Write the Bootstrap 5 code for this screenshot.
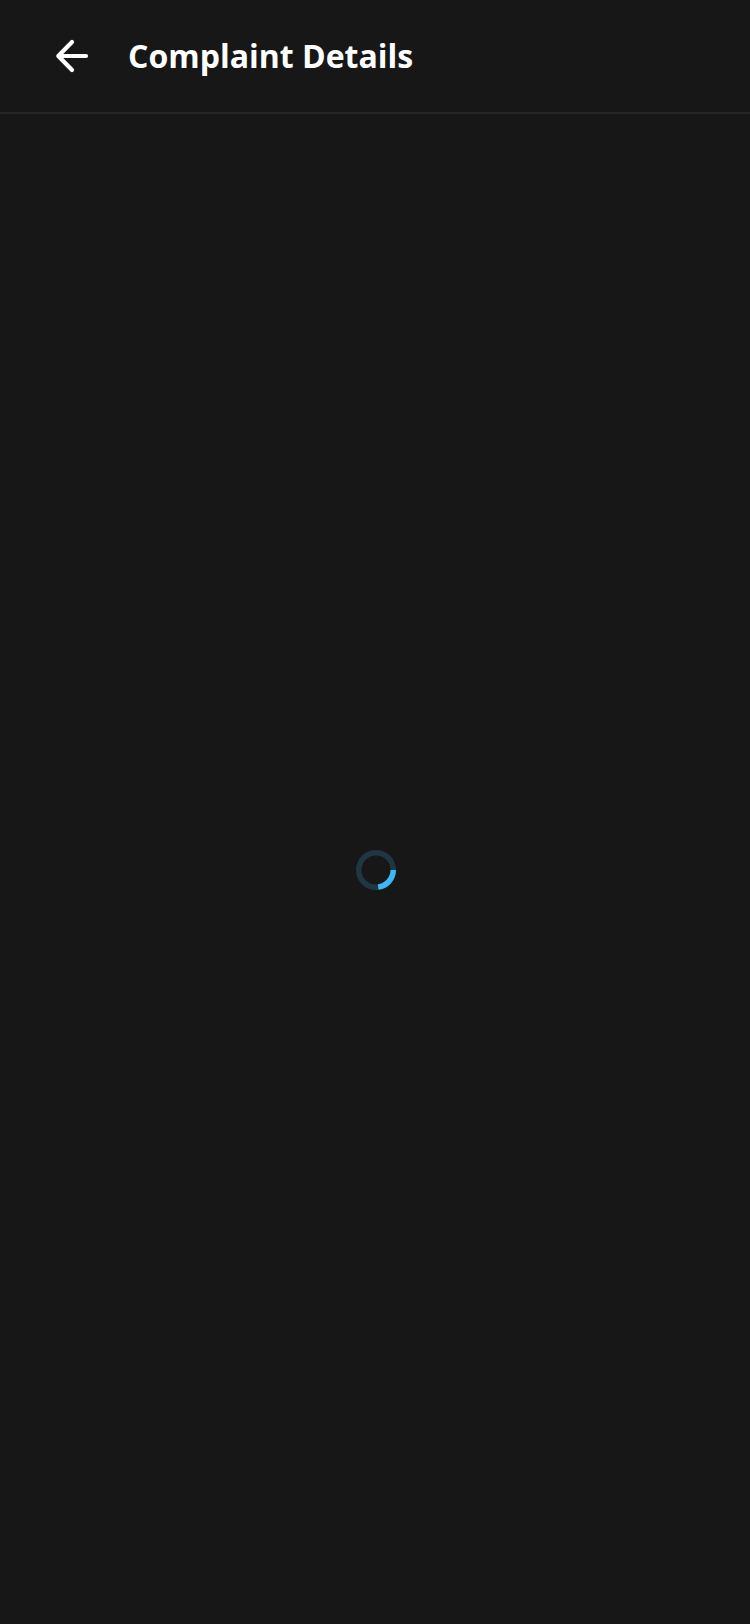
<!DOCTYPE html>
<html lang="en" data-bs-theme="dark">
<head>
<meta charset="utf-8">
<meta name="viewport" content="width=device-width, initial-scale=1">
<title>Complaint Details</title>
<link href="https://cdn.jsdelivr.net/npm/bootstrap@5.3.0/dist/css/bootstrap.min.css" rel="stylesheet">
<style>
body { background: #171717; color: #fff; font-family: "Open Sans", "Noto Sans", sans-serif; }
.app-header { height: 114px; padding: 0 48px; gap: 32px; border-bottom: 2px solid #252525; }
.back-btn { width: 48px; height: 48px; color: #fff; }
.app-title { font-size: 32px; line-height: 48px; font-weight: 700; }
.loader { width: 42px; height: 42px; }
</style>
</head>
<body class="d-flex flex-column min-vh-100">
<header class="app-header d-flex align-items-center">
  <button type="button" class="back-btn btn p-0 border-0 d-flex" aria-label="Back">
    <svg width="48" height="48" viewBox="0 0 48 48" fill="none" stroke="currentColor" stroke-width="4.2" stroke-linecap="round" stroke-linejoin="round" aria-hidden="true"><path d="M38 24H11M24 38L10.3 24L24 10"/></svg>
  </button>
  <h1 class="app-title m-0">Complaint Details</h1>
</header>
<main class="flex-grow-1 d-flex align-items-center justify-content-center">
  <div role="status" aria-label="Loading" class="d-flex">
    <svg class="loader" viewBox="0 0 42 42" fill="none" stroke-width="5.5" aria-hidden="true">
      <circle cx="22" cy="22" r="17.25" stroke="#1f3643"/>
      <path d="M39.25 22A17.25 17.25 0 0 1 24.2 39.1" stroke="#3cb9f5"/>
    </svg>
  </div>
</main>
<script src="https://cdn.jsdelivr.net/npm/bootstrap@5.3.0/dist/js/bootstrap.bundle.min.js"></script>
</body>
</html>
